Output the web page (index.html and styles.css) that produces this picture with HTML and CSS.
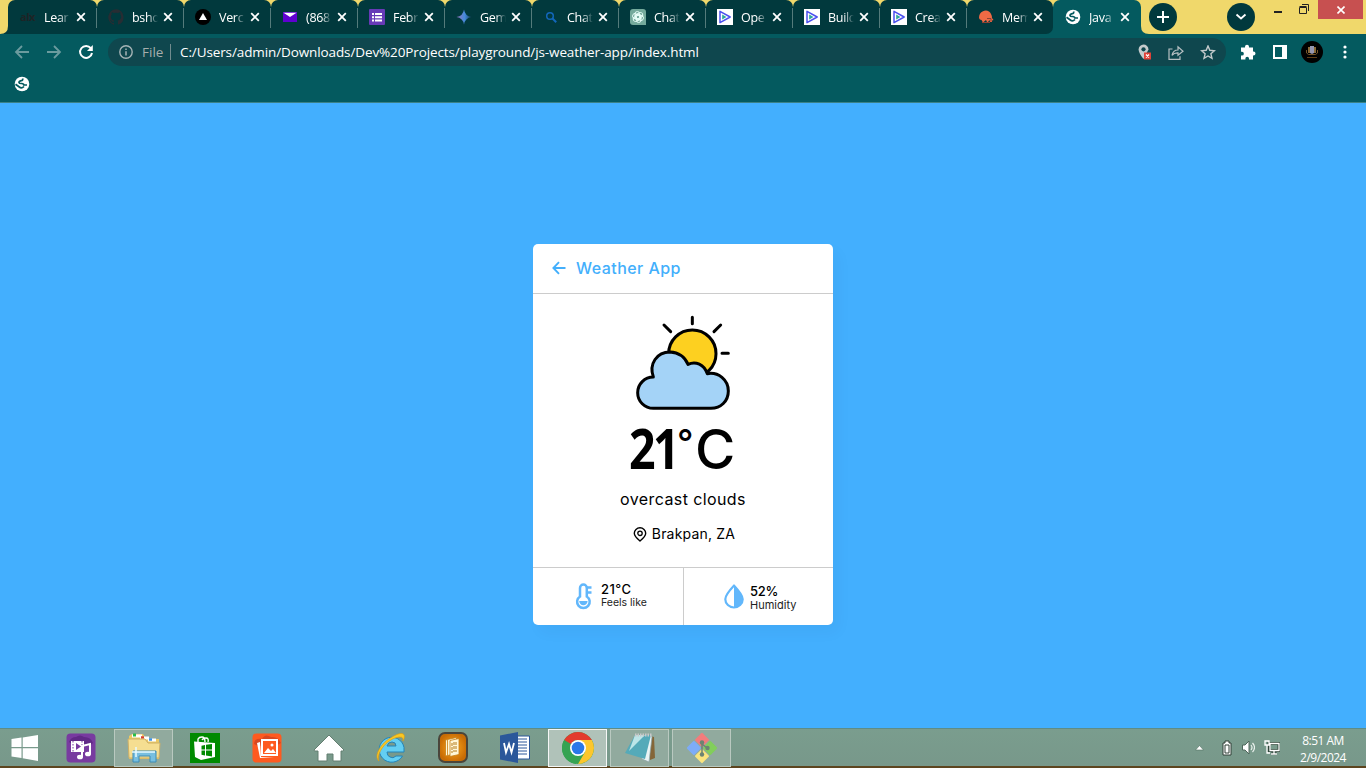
FILE: index.html
```html
<!DOCTYPE html>
<html lang="en">
<head>
<meta charset="utf-8">
<title>JavaScript Weather App</title>
<link rel="stylesheet" href="styles.css">
</head>
<body>
<svg class="defs" aria-hidden="true">
  <symbol id="x" viewBox="0 0 10 10"><path d="M1.2 1.2 8.8 8.8M8.8 1.2 1.2 8.8" stroke="#fff" stroke-width="1.8"/></symbol>
  <symbol id="globe" viewBox="0 0 16 16"><circle cx="8" cy="8" r="7.3" fill="#fff"/><path d="M8.600 2.600Q9.200 4.400 7.200 4.600 5 5 5 6.600 5.200 7.600 7.600 7.500 9.800 7.600 9.800 9H13M1.500 8.200 5.300 11Q7.500 13 10 10.500" fill="none" stroke="#045a5f" stroke-width="1.700"/></symbol>
  <symbol id="play" viewBox="0 0 16 16"><path fill="#fff" d="M0 0h16v16H0z"/><path d="M3 2.3 13.2 8 3 13.7Z" fill="none" stroke="#4b50ee" stroke-width="1.5" stroke-linejoin="round"/><path d="M5.2 5.5 9.5 8 5.2 10.5Z" fill="#2ba79d"/></symbol>
</svg>
<div class="screen">
  <header class="titlebar">
    <nav class="tabs">
      <svg class="flare" viewBox="0 0 8 34"><path d="M8 26Q8 34 0 34H8Z" fill="#01393d"/></svg>
      <div class="tab first"><span class="fav alx">alx</span><span class="name">Lear</span><svg class="close"><use href="#x"/></svg></div>
      <div class="tab"><svg class="fav" viewBox="0 0 16 16"><path fill="#272d33" d="M8 .2a8 8 0 0 0-2.5 15.5c.4.1.5-.2.5-.4v-1.5c-2.2.5-2.7-1-2.7-1-.4-.9-.9-1.2-.9-1.2-.7-.5.1-.5.1-.5.8.1 1.2.8 1.2.8.7 1.2 1.9.9 2.3.7.1-.5.3-.9.5-1.1-1.8-.2-3.6-.9-3.6-4 0-.9.3-1.6.8-2.1-.1-.2-.4-1 .1-2.1 0 0 .7-.2 2.2.8a8 8 0 0 1 4 0c1.5-1 2.2-.8 2.2-.8.4 1.1.2 1.9.1 2.1.5.6.8 1.3.8 2.1 0 3.1-1.9 3.8-3.7 4 .3.2.6.7.6 1.5v2.2c0 .2.1.5.5.4A8 8 0 0 0 8 .2Z"/></svg><span class="name">bsho</span><svg class="close"><use href="#x"/></svg></div>
      <div class="tab"><svg class="fav" viewBox="0 0 16 16"><circle cx="8" cy="8" r="8"/><path fill="#fff" d="m8 4 4 7H4z"/></svg><span class="name">Verc</span><svg class="close"><use href="#x"/></svg></div>
      <div class="tab"><svg class="fav" viewBox="0 0 16 16"><path fill="#5f01d1" d="M1 3h14v10H1z"/><path fill="#fff" d="M1.5 3.7h13L8 8z"/></svg><span class="name">(868</span><svg class="close"><use href="#x"/></svg></div>
      <div class="tab"><svg class="fav" viewBox="0 0 16 16"><rect width="16" height="16" rx="1" fill="#673ab7"/><path stroke="#fff" stroke-width="2" d="M3 5h2m1 0h7M3 8.2h2m1 0h7M3 11.4h2m1 0h7"/></svg><span class="name">Febr</span><svg class="close"><use href="#x"/></svg></div>
      <div class="tab"><svg class="fav" viewBox="0 0 16 16"><defs><linearGradient id="gem"><stop stop-color="#9a75b9"/><stop offset=".55" stop-color="#438bdd"/><stop offset="1" stop-color="#173d56"/></linearGradient></defs><path fill="url(#gem)" d="M8 .5Q9 7 15.5 8 9 9 8 15.5 7 9 .5 8 7 7 8 .5Z"/></svg><span class="name">Gem</span><svg class="close"><use href="#x"/></svg></div>
      <div class="tab"><svg class="fav" viewBox="0 0 16 16"><circle cx="7" cy="7" r="3.300" fill="none" stroke="#1267bb" stroke-width="1.5"/><path d="m9.3 9.3 3.9 3.9" stroke="#1267bb" stroke-width="2"/></svg><span class="name">Chat</span><svg class="close"><use href="#x"/></svg></div>
      <div class="tab"><svg class="fav" viewBox="0 0 16 16"><path fill="#74aa9c" d="M3 0h10q3 0 3 3v13H3q-3 0-3-3V3q0-3 3-3Z"/><g fill="none" stroke="#e9fff9" stroke-width=".9"><rect x="5" y="2.5" width="4.6" height="8" rx="2.3"/><rect x="5" y="2.5" width="4.6" height="8" rx="2.3" transform="rotate(60 8 8)"/><rect x="5" y="2.5" width="4.6" height="8" rx="2.3" transform="rotate(120 8 8)"/><rect x="5" y="2.5" width="4.6" height="8" rx="2.3" transform="rotate(180 8 8)"/><rect x="5" y="2.5" width="4.6" height="8" rx="2.3" transform="rotate(240 8 8)"/><rect x="5" y="2.5" width="4.6" height="8" rx="2.3" transform="rotate(300 8 8)"/></g></svg><span class="name">Chat</span><svg class="close"><use href="#x"/></svg></div>
      <div class="tab"><svg class="fav"><use href="#play"/></svg><span class="name">Ope</span><svg class="close"><use href="#x"/></svg></div>
      <div class="tab"><svg class="fav"><use href="#play"/></svg><span class="name">Build</span><svg class="close"><use href="#x"/></svg></div>
      <div class="tab"><svg class="fav"><use href="#play"/></svg><span class="name">Crea</span><svg class="close"><use href="#x"/></svg></div>
      <div class="lastwrap"><div class="tab last"><svg class="fav" viewBox="0 0 16 16"><path fill="#f06a45" d="M1 9Q1 4 4.500 2.500 8 .5 11 2.500 14 5 14 9l1.500 2-1.500.500v1.500h-2l-.500-2-1.500 2H9l-1-2-3 2.500-1.500-2.500Q1.500 11 1 9Z"/><path d="M9 9.500h4v3M4 13.500h8" stroke="#8d4234" fill="none"/></svg><span class="name">Mem</span><svg class="close"><use href="#x"/></svg></div></div>
      <div class="tab active"><svg class="fav"><use href="#globe"/></svg><span class="name">Java</span><svg class="close"><use href="#x"/></svg></div>
      <svg class="flare" viewBox="0 0 8 34"><path d="M0 26Q0 34 8 34H0Z" fill="#045a5f"/></svg>
    </nav>
    <div class="round plus"><svg width="14" height="14"><path d="M7 1v12M1 7h12" stroke="#fff" stroke-width="2"/></svg></div>
    <div class="round search"><svg width="12" height="8"><path d="m1.5 1.5 4.5 4 4.5-4" fill="none" stroke="#fff" stroke-width="1.8"/></svg></div>
    <div class="winctl">
      <svg width="8" height="3"><path d="M0 0h8v2H0z" fill="#222"/></svg>
      <svg class="restore" width="10" height="10"><path d="M.5 3.5h7v6h-7zM.5 2.5h7M3 .5h6.5V7" fill="none" stroke="#222"/></svg>
      <div class="winclose"><svg width="8" height="8"><path d="m.5.5 7 7m0-7-7 7" stroke="#fff" stroke-width="1.6"/></svg></div>
    </div>
  </header>
  <div class="toolbar">
    <svg class="nav dim" viewBox="0 0 16 16"><path d="M15 8H2m6-6L2 8l6 6"/></svg>
    <svg class="nav dim" viewBox="0 0 16 16"><path d="M1 8h13M8 2l6 6-6 6"/></svg>
    <svg class="nav reload" viewBox="0 0 16 16"><path d="M12.8 4.2A6 6 0 1 0 14 9"/><path d="M14.8 1v6H9z" class="solid"/></svg>
    <div class="url">
      <svg width="14" height="14"><circle cx="7" cy="7" r="6.2" fill="none" stroke="#a6b4b6" stroke-width="1.4"/><path d="M7 6.2v4.3M7 3.4V5" stroke="#a6b4b6" stroke-width="1.5"/></svg>
      <span class="file">File</span><span class="sep"></span><span class="address">C:/Users/admin/Downloads/Dev%20Projects/playground/js-weather-app/index.html</span>
      <svg class="pin" width="14" height="16"><path d="M5.5.6A5 5 0 0 0 .6 5.5C.6 9.3 5.5 15 5.5 15l5-9.5A5 5 0 0 0 5.500.6Z" fill="#c4cbcc"/><circle cx="5.5" cy="5.3" r="2.1" fill="#0f474e"/><path fill="#e04238" d="M6 8.500h7v7H6z"/><path d="m8 10.500 3 3m0-3-3 3" stroke="#fff" stroke-width="1.2"/></svg>
      <svg class="share" width="16" height="15"><path d="M4.5 4H1v10.3h11v-3M4 10.3Q5 5 10 5V1.8L15 6.3l-5 4V7.8q-4-.2-6 2.5Z" fill="none" stroke="#b8c1c3" stroke-width="1.2"/></svg>
      <svg width="16" height="15"><path d="m8 1 1.8 4.3 4.7.4-3.6 3.1 1.1 4.6L8 11l-4 2.4 1.1-4.6-3.6-3.1 4.700-.4Z" fill="none" stroke="#c4cbcc" stroke-width="1.4"/></svg>
    </div>
    <svg class="puzzle" width="16" height="16"><path d="M1 3.5h4V2.8a2 2 0 0 1 4 0v.7h4v4h.5a2 2 0 0 1 0 4H13v4H9v-1a1.7 1.7 0 0 0-3.6 0v1H1v-4h1a1.8 1.8 0 0 0 0-3.700H1Z" fill="#fff"/></svg>
    <svg class="panel" width="14" height="14"><path fill="#fff" d="M0 0h14v14H0z"/><path fill="#045a5f" d="M2 2h7v10H2z"/></svg>
    <svg class="avatar" width="22" height="22"><circle cx="11" cy="11" r="11"/><path d="M7 6h2v6H7zm6 0h2v6h-2z" fill="#8a6b3a"/><path d="M9 5h4v7l-2 1-2-1z" fill="#9697b0"/><path d="M5.500 9v3l2 1.500h7l2-1.500V9" stroke="#735329" fill="none"/><path d="M6 16.500h10" stroke="#5d3b16"/></svg>
    <svg class="dots" width="4" height="14"><circle cx="2" cy="2" r="1.6"/><circle cx="2" cy="7" r="1.6"/><circle cx="2" cy="12" r="1.6"/></svg>
  </div>
  <div class="bookmarks"><svg width="16" height="16"><use href="#globe"/></svg></div>
  <main class="page">
    <section class="card">
      <h1><svg width="14" height="14"><path d="M13.5 7H1.5M7 1.2 1.4 7 7 12.8" fill="none" stroke="#43affc" stroke-width="1.9"/></svg><span class="t-title">Weather App</span></h1>
      <div class="weather">
        <svg class="sun" viewBox="339 234 300 300" stroke="#000" stroke-width="9" stroke-linecap="round" stroke-linejoin="round"><circle cx="517" cy="356" r="71" fill="#fdd020"/><path d="M517 247v19M432 270l20 20M602 270l-20 20M606 355h19"/><path d="M400 520A47 47 0 0 1 400 426C386 386 411 351 450 351Q489 353 504 388C527 377 552 388 562 416C595 410 625 435 625 468C625 499 602 520 573 520Z" fill="#a4d3f7"/></svg>
        <div class="temp"><b>21</b><span class="deg">°</span><span class="unit">C</span></div>
        <div class="desc">overcast clouds</div>
        <div class="place"><svg width="14" height="15"><path d="M7 14Q1.300 9.500 1.300 6.300a5.700 5.500 0 0 1 11.400 0Q12.700 9.500 7 14Z" fill="none" stroke="#000" stroke-width="1.4"/><circle cx="7" cy="6.300" r="2.200" fill="none" stroke="#000" stroke-width="1.3"/></svg><span>Brakpan, ZA</span></div>
      </div>
      <div class="details">
        <div class="cell feels"><svg width="18" height="27"><path d="M5 13.500V5a3.400 3.400 0 0 1 6.800 0v8.500a6.300 6.300 0 1 1-6.800 0Z" fill="none" stroke="#62b7fb" stroke-width="2.500"/><path d="M4.200 18h8.400a4.200 4.200 0 1 1-8.400 0Z" fill="#62b7fb"/><path d="M12 4.500h4.500M12 9.500h4.500" stroke="#62b7fb" stroke-width="2.500"/></svg><div><p class="big">21°C</p><p class="small">Feels like</p></div></div>
        <div class="cell humid"><svg width="20" height="25"><path d="M10 1.700C6 6 1.300 11 1.300 15.200a8.700 8.300 0 0 0 17.400 0C18.700 11 14 6 10 1.700Z" fill="none" stroke="#62b7fb" stroke-width="2.200"/><path d="M10 1v22.500a8.700 8.300 0 0 0 8.700-8.300C18.700 11 14 6 10 1Z" fill="#62b7fb"/></svg><div><p class="big">52%</p><p class="small">Humidity</p></div></div>
      </div>
    </section>
  </main>
  <footer class="taskbar">
    <div class="app start"><svg width="28" height="26" fill="#fff"><path d="M.5 4 10.500 2.600V12H.5zM11.700 2.400 27 0v12H11.700zM.5 13.200h10V23L.5 21.500zM11.700 13.200H27V26l-15.300-2.700z"/></svg></div>
    <div class="app"><svg width="30" height="30"><rect x=".5" y=".5" width="29" height="29" rx="4" fill="#783ba0"/><path d="M3 9q2-5 7-5 4-3 8 0 7 0 9 6-3 4-9 2-9 2-15-3Z" fill="#612a87"/><path d="M5 8h13v11H5z" fill="#fff"/><path d="M7 8v11m9-11v11" stroke="#783ba0" stroke-dasharray="1.500 1.500"/><path d="m10 10 5 3.500-5 3.500z" fill="#783ba0"/><path d="M16 24V13l8-2v10" fill="none" stroke="#fff" stroke-width="2"/><ellipse cx="14" cy="24" rx="3" ry="2.300" fill="#fff"/><ellipse cx="22" cy="21" rx="3" ry="2.300" fill="#fff"/></svg></div>
    <div class="app open"><svg width="34" height="32"><path d="M2 27V4l3-2h11l2 3 6 2h8v20Z" fill="#eac965"/><path d="M5 4h10M13 6h9m-1 2h8" stroke="#fff" stroke-width="3"/><path d="M6 3h3" stroke="#28bd45" stroke-width="3"/><path d="M14 5.500h3" stroke="#d93e2c" stroke-width="2.500"/><path d="M22 7.500h3" stroke="#3c91e5" stroke-width="2.500"/><path d="M1 7h17l3 4h12l-1 15H2Z" fill="#f5de91" stroke="#cfb067"/><path d="M6 30V19h23v11h-6v-6H12v6Z" fill="#78bfe0" stroke="#3c8bb5"/><path d="M7 20h21M9 15v10m-4-5h9" stroke="#e8fbff" stroke-width="1.500"/></svg></div>
    <div class="app"><svg width="30" height="30"><path fill="#008a00" d="M0 0h30v30H0z"/><path d="M4 8.500 25 10v14l-14 3-6-3Z" fill="#fff"/><path d="M8 10V6q1-2 4-2t3 5M12 7q1-2 4-2t2 4" stroke="#fff" stroke-width="1.400" fill="none"/><path d="M11.500 12.800 15 12v4.500h-3.500zm4.500-1 6-.8v5.500h-6zM11.500 17.500H15v5l-3.500-.8zm4.500 0h6v6l-6-1z" fill="#008a00"/></svg></div>
    <div class="app"><svg width="30" height="30"><rect x=".5" y=".5" width="29" height="29" rx="4" fill="#fe5a1f"/><path d="M2 11q0-6 8-5 3-6 9-2 7-1 10 6-7 5-13 2-8 3-14-1Z" fill="#d84820"/><path d="M10 7h15v15H10z" fill="#fe5a1f" stroke="#fff" stroke-width="2"/><path d="M8 9 5 10l3 15 14-1H9Z" fill="#fff"/><path d="m12 20 4-5 3 3 2-2 3 4Z" fill="#fff"/><circle cx="20" cy="12" r="1.500" fill="#fff"/></svg></div>
    <div class="app"><svg width="32" height="28"><path d="m16 1 15 15-1.500 1H28v10h-8v-7h-6v7H5V17H1.500L1 16Z" fill="#fff" stroke="#637e70"/></svg></div>
    <div class="app"><svg width="32" height="31"><path d="M29 15.500A12.500 12.500 0 1 0 27.500 24h-6.500q-3 3-6 1-3-1-3-5h17ZM12 14q1-4 5-4T21 14Z" fill="#63cef2" stroke="#2484b8"/><path d="M4 29C-2 24 6 11 17 5 27-1 32 1 28 9q1-6-8-3C9 10 1 23 4 29Z" fill="#fbc822" stroke="#d89d17" stroke-width=".7"/></svg></div>
    <div class="app"><svg width="30" height="31"><defs><radialGradient id="orange"><stop stop-color="#ffa91e"/><stop offset="1" stop-color="#c86c05"/></radialGradient></defs><rect x="1" y="1" width="28" height="29" rx="6" fill="url(#orange)" stroke="#4a453b" stroke-width="2"/><g fill="#fff7d8" stroke="#c77d15" stroke-width=".8"><path d="m7.500 8 9-2v16l-9 2Z"/><path d="m9.500 7.500 9-2v16l-9 2Z"/><path d="m12 8.500 9-2v16l-9 2Z"/></g><path d="M14 11v10m4-11v10m-2-10v10" stroke="#b47a1a" stroke-dasharray="3 1"/></svg></div>
    <div class="app"><svg width="30" height="31"><path d="M17 4h12.500v23H17z" fill="#fff" stroke="#2b579a"/><path d="M18 7h9m-9 3h9m-9 3h9m-9 3h9m-9 3h9m-9 3h9" stroke="#2b579a"/><path fill="#2b579a" d="M0 3.500 18 0v31L0 27.500Z"/><path d="m4 11 2 9.500L9 12l2.500 8.500L14 11" fill="none" stroke="#fff" stroke-width="1.800"/></svg></div>
    <div class="app open current"><svg width="32" height="32" viewBox="0 0 32 32"><circle cx="16" cy="16" r="16" fill="#36a352"/><path d="M2.150 8A16 16 0 0 1 29.850 8H16a8 8 0 0 0-7 4Z" fill="#e33b2e"/><path d="M2.150 8 9 20q3 4 7 4l-2 8A16 16 0 0 1 2.150 8Z" fill="#36a352"/><path d="M29.850 8A16 16 0 0 1 16 32l7-12q2-7-7-12Z" fill="#fcc62c"/><circle cx="16" cy="16" r="8" fill="#fff"/><circle cx="16" cy="16" r="6.300" fill="#2978e8"/></svg></div>
    <div class="app open"><svg width="32" height="31"><path d="m26 4 4 1 1 21-5 2Z" fill="#846638"/><path d="M11 3h16l1 2-3 25-7-3Z" fill="#eaf4f5" stroke="#8aa0a4" stroke-width=".7"/><path d="M11 3h16l-6 24L1 21Z" fill="#55aab9"/><path d="M11 3h10L5 19Z" fill="#bce5e8"/><path d="M11 3h17" stroke="#c9c9c9" stroke-width="3" stroke-dasharray="1.500 1"/></svg></div>
    <div class="app open"><svg width="32" height="32" viewBox="0 0 32 32"><g transform="rotate(45 16 16)"><rect x="5" y="5" width="10.500" height="10.500" rx="1" fill="#f37c7c"/><rect x="16.500" y="5" width="10.500" height="10.500" rx="1" fill="#82ce5b"/><rect x="5" y="16.500" width="10.500" height="10.500" rx="1" fill="#7eacf7"/><rect x="16.500" y="16.500" width="10.500" height="10.500" rx="1" fill="#fae47e"/></g><path d="M16 11v11m0-10 5 4" stroke="#6b8473" stroke-width="1.500"/><circle cx="16" cy="10.500" r="2.200" fill="#6b8473"/><circle cx="16" cy="22.500" r="2.200" fill="#6b8473"/><circle cx="21.500" cy="16" r="2.200" fill="#6b8473"/></svg></div>
    <div class="tray">
      <svg width="9" height="6"><path d="M4.500.500 8.500 5h-8Z" fill="#fff" stroke="#536f62" stroke-width=".6"/></svg>
      <svg class="battery" width="10" height="16"><path d="M3 1h4v2h2v12H1V3h2Z" fill="#fff" stroke="#303f37"/><path d="M3 5h4v8H3z" fill="#fff" stroke="#303f37"/></svg>
      <svg class="sound" width="13" height="15"><path d="M.5 5H3l4-4v13l-4-4H.5Z" fill="#fff" stroke="#4f675b"/><path d="M9 5q2 2.500 0 5m1.500-7q4 4.500 0 9" fill="none" stroke="#eaf1ed" stroke-width="1.200"/></svg>
      <svg class="network" width="16" height="15"><path d="M5 3.500h10v7H5zM10 11v3m-3 0h6" fill="none" stroke="#2f4439" stroke-width="3"/><path d="M1 1h4v4H1zM3 5v8h3M6 3.500h9v7H6zM10 11v3m-3 0h6" fill="none" stroke="#fff" stroke-width="1.300"/></svg>
      <div class="clock"><span>8:51 AM</span><span>2/9/2024</span></div>
    </div>
  </footer>
</div>
</body>
</html>
```
FILE: styles.css
```css
* { box-sizing: border-box; }
body { margin: 0; font-family: "Open Sans", "Noto Sans", sans-serif; overflow: hidden; }
svg { display: block; flex: none; }
p, h1 { margin: 0; }
.defs { position: absolute; width: 0; height: 0; }
.screen { width: 1366px; height: 768px; display: flex; flex-direction: column; }

.titlebar { height: 34px; background: #f0d86b; display: flex; }
.tabs { display: flex; width: 1149px; }
.flare { width: 8px; height: 34px; }
.tab { width: 87px; height: 34px; display: flex; align-items: center; padding: 0 11px; background: #01393d; border-radius: 7px 7px 0 0; color: #fff; font-size: 12.5px; letter-spacing: -.3px; }
.tab:not(.last):not(.active) { background-image: linear-gradient(#547b7b, #547b7b); background-size: 1px 20px; background-position: right 8px; background-repeat: no-repeat; }
.first { width: 89px; padding-left: 12px; }
.lastwrap { width: 86px; background: linear-gradient(#f0d86b 50%, #045a5f 50%); }
.tab.last { width: 86px; border-radius: 7px; border-bottom-left-radius: 0; }
.tab.active { background: #045a5f; width: 88px; padding-left: 12px; }
.fav { width: 16px; height: 16px; flex: none; }
.alx { font: bold 11px/15px "Open Sans", sans-serif; color: #1e2425; letter-spacing: -.5px; }
.name { width: 26px; margin-left: 8px; white-space: nowrap; -webkit-mask-image: linear-gradient(90deg, #000 60%, transparent); mask-image: linear-gradient(90deg, #000 60%, transparent); }
.close { width: 10px; height: 10px; margin-left: 5px; }
.first .close { margin-left: 6px; }
.round { width: 28px; height: 28px; border-radius: 50%; background: #01393d; margin-top: 3px; display: grid; place-items: center; }
.search { margin-left: 50px; }
.winctl { display: flex; margin-left: 19px; }
.winctl > svg { margin-top: 11px; }
.winctl .restore { margin: 4px 9px 0 17px; }
.winclose { width: 45px; height: 19px; background: #c75050; display: grid; place-items: center; }

.toolbar { height: 36px; background: #045a5f; display: flex; align-items: center; padding-left: 14px; }
.nav { width: 16px; height: 16px; margin-right: 16px; fill: none; stroke: #fff; stroke-width: 2; }
.dim { stroke: #6b9b9e; stroke-width: 1.8; }
.reload { margin-right: 14px; }
.solid { fill: #fff; stroke: none; }
.url { width: 1118px; height: 28px; border-radius: 14px; background: #0f474e; display: flex; align-items: center; padding: 0 10px 0 11px; font-size: 13px; color: #fff; }
.file { color: #a6aead; margin-left: 9px; width: 28px; font-size: 13.5px; }
.sep { width: 1px; height: 16px; background: #718b8e; margin-right: 9px; }
.address { flex: 1; white-space: nowrap; font-size: 13.5px; letter-spacing: -.11px; }
.share { margin: 0 16px; }
.puzzle { margin-left: 14px; }
.panel { margin-left: 17px; }
.avatar { margin-left: 14px; }
.dots { margin-left: 20px; fill: #fff; }
.bookmarks { height: 33px; background: #045a5f; border-bottom: 1px solid #3b8186; padding: 6px 14px; }

.page { flex: 1; background: #43affe; display: flex; justify-content: center; padding-top: 141px; font-family: Inter, sans-serif; }
.card { width: 300px; height: 381px; background: #fff; border-radius: 5px; box-shadow: 6px 8px 15px rgba(0,0,0,.03); }
.card h1 { height: 50px; border-bottom: 1px solid #ccc; display: flex; align-items: center; padding: 0 0 2px 19px; color: #43affc; font-size: 16px; font-weight: 500; }
.t-title { margin-left: 10px; letter-spacing: .45px; }
.weather { height: 273px; display: flex; flex-direction: column; align-items: center; padding-top: 19px; }
.sun { width: 100px; height: 100px; }
.temp { display: flex; font-size: 55px; line-height: 66px; height: 66px; margin-top: 3px; }
.temp b { font: 700 56px/66px "Open Sans", sans-serif; letter-spacing: -3px; width: 49px; margin: -2px 0 0 -2px; transform: scaleX(.83); transform-origin: left; }
.deg { font-size: 36px; font-weight: 500; line-height: 52px; width: 17px; text-indent: -1px; }
.unit { font-weight: 500; width: 40px; }
.desc { font-size: 16px; line-height: 24px; margin-top: 5px; letter-spacing: .4px; }
.place { display: flex; align-items: center; gap: 5px; font-size: 14px; line-height: 22px; margin-top: 12px; margin-left: 2px; }
.place span { letter-spacing: .2px; }
.details { height: 58px; border-top: 1px solid #ccc; display: flex; }
.cell { display: flex; align-items: center; flex: 1; }
.feels { flex: 0 0 151px; border-right: 1px solid #ccc; padding-left: 42px; gap: 8px; }
.humid { padding-left: 40px; gap: 6px; }
.big { font-size: 13px; line-height: 14px; font-weight: 500; letter-spacing: .4px; }
.small { font-size: 10.5px; line-height: 13px; color: #222; }
.feels div { padding-bottom: 3px; }
.humid .big { letter-spacing: -.3px; }
.humid div { padding-top: 2px; }
.humid .small { font-size: 11px; line-height: 14px; }

.taskbar { height: 40px; background: linear-gradient(#7a9d8e, #78988a); border-top: 1px solid #5e8c87; border-bottom: 2px solid #5d451f; display: flex; align-items: center; }
.app { width: 59px; height: 38px; margin-right: 3px; display: grid; place-items: center; flex: none; }
.app:not(.open):not(.start) { padding-right: 2px; }
.start { width: 50px; }
.start + .app { margin-left: -1px; }
.open { background: #91aa9e; border: 1px solid #b9c9c0; }
.current { background: #b0c2b9; border: 1px solid #f5f7f6; }
.tray { margin-left: auto; display: flex; align-items: center; }
.battery { margin-left: 18px; }
.sound { margin-left: 10px; }
.network { margin-left: 9px; }
.clock { width: 86px; display: flex; flex-direction: column; align-items: center; color: #fff; font-size: 12px; line-height: 17px; letter-spacing: -.5px; padding: 2px 0 0; }
```
